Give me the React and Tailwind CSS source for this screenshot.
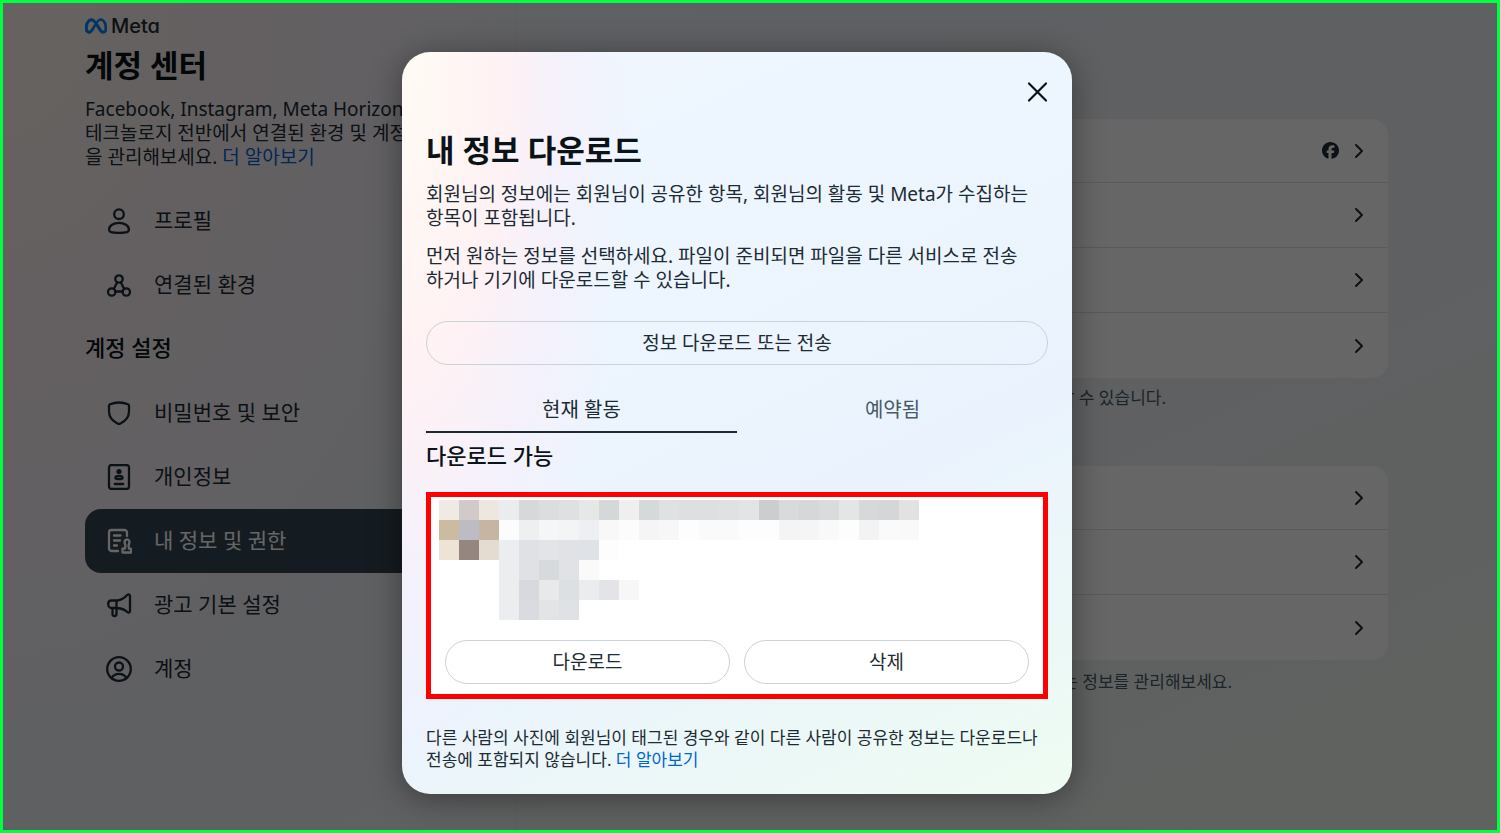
import React, { useState } from 'react';
import { ChevronRight } from 'lucide-react';
import { FaFacebook, FaMeta } from 'react-icons/fa6';

const Icon = ({ children }) => (
  <svg
    width="26"
    height="26"
    viewBox="0 0 26 26"
    fill="none"
    stroke="currentColor"
    strokeWidth="2.3"
    strokeLinecap="round"
    strokeLinejoin="round"
    className="shrink-0"
    aria-hidden="true"
  >
    {children}
  </svg>
);

const ProfileIcon = () => (
  <Icon>
    <circle cx="13" cy="6.2" r="4.8" />
    <path d="M13 14.8c5.600 0 9.900 3 9.900 6.800 0 1.600-.8 2.200-2.100 2.600-2 .5-4.700.7-7.800.7s-5.800-.2-7.800-.7c-1.300-.4-2.100-1-2.100-2.600 0-3.800 4.300-6.800 9.900-6.800z" />
  </Icon>
);

const ConnectedIcon = () => (
  <Icon>
    <circle cx="13" cy="7" r="3.700" />
    <circle cx="5.700" cy="20" r="3.700" />
    <circle cx="20.300" cy="20" r="3.700" />
    <path d="M11.200 10.300 7.900 16.800M14.800 10.300l3.300 6.500M9.500 19.500h7" />
  </Icon>
);

const ShieldIcon = () => (
  <Icon>
    <path d="M13 2.500c3.200 0 6.300.6 8.900 1.700.7.300 1.100.9 1.100 1.600v5.700c0 5.500-3.700 9.700-8.900 12.200-.7.300-1.500.3-2.200 0C6.700 21.200 3 17 3 11.500V5.800c0-.7.400-1.300 1.100-1.600C6.700 3.100 9.800 2.500 13 2.500z" />
  </Icon>
);

const BadgeIcon = () => (
  <Icon>
    <rect x="3" y="1" width="20" height="24" rx="2.500" />
    <circle cx="13" cy="7.500" r="2.600" fill="currentColor" stroke="none" />
    <path d="M13 12c2.200 0 3.600 1 3.600 2 0 .9-1.300 1.200-3.600 1.200s-3.600-.3-3.600-1.200c0-1 1.400-2 3.600-2zM8.800 20h8.400" />
  </Icon>
);

const PermissionIcon = () => (
  <Icon>
    <path d="M12 23H5.500A2.500 2.500 0 0 1 3 20.500v-16A2.500 2.500 0 0 1 5.500 2h13A2.500 2.500 0 0 1 21 4.500V8" />
    <path d="M8 7.500h6.500M8 12.500h6M8 17.500h3" />
    <path d="M16.500 24.500v-3.800h2.300l.7-2.800-.8-3a2.400 2.800 0 1 1 4.600 0l-.8 3 .5 2.800h2v3.800z" />
  </Icon>
);

const MegaphoneIcon = () => (
  <Icon>
    <path d="M11.500 8.500H5.500C3.500 8.500 2.200 9.900 2.200 12s1.300 4 3.300 4h6c3.800.3 7 1.500 10 4.200.9.700 2.500.3 2.500-1.200V4c0-1.500-1.600-1.900-2.500-1.200-3 3.200-6.200 5.300-10 5.700zM10.500 8.500V16M6.500 16v6c0 1.200.8 2 2 2s2-.8 2-2v-6" />
  </Icon>
);

const AccountIcon = () => (
  <Icon>
    <circle cx="13" cy="13" r="11.800" />
    <circle cx="13" cy="10.500" r="4" />
    <path d="M5.500 22c1.400-2.600 4.300-4.200 7.500-4.200s6.100 1.600 7.500 4.200" />
  </Icon>
);

const topNav = [
  { id: 'profile', icon: ProfileIcon, label: '프로필' },
  { id: 'connected', icon: ConnectedIcon, label: '연결된 환경' }
];

const settingsNav = [
  { id: 'security', icon: ShieldIcon, label: '비밀번호 및 보안' },
  { id: 'personal', icon: BadgeIcon, label: '개인정보' },
  { id: 'permissions', icon: PermissionIcon, label: '내 정보 및 권한' },
  { id: 'ads', icon: MegaphoneIcon, label: '광고 기본 설정' },
  { id: 'account', icon: AccountIcon, label: '계정' }
];

// 20px blocks, null leaves the block empty
const mosaic = [
  ['#efeae4', '#d1cac9', '#ede7e0', '#ebecee', '#d6d8d9', '#dbddde', '#dfe0e1', '#e6e8e6', '#d5d8d9', '#efefef', '#d6d9da', '#e0e1e3', '#dddfe0', '#dddfe0', '#e0e1e2', '#e3e4e5', '#cccdce', '#d9dadc', '#d6d7d9', '#dadbdd', '#e4e6e5', '#d6d8d9', '#d4d6d8', '#e2e2e2'],
  ['#cbbba0', '#bdbcc5', '#c6b5a3', '#fcfcfc', '#eef0ef', '#f4f6f8', '#f3f4f4', '#edeff2', '#f8f8f8', '#fcfcfc', '#f5f5f5', '#f7f7f7', '#fdfdfd', '#fafafa', '#fafafa', '#fdfdfd', '#fdfdfd', '#f4f4f4', '#f4f5f4', '#f9f9f9', '#fdfdfd', '#f3f3f3', '#fafafa', '#f9f9f9'],
  ['#eee4d6', '#95867f', '#e4dcd1', '#ecedf0', '#dfe1e5', '#e2e4e8', '#e0e2e6', '#dfe3e7', '#fdfdfd'],
  [null, null, null, '#ecedef', '#dfe1e4', '#d6dadc', '#e0e2e5', '#fafafa'],
  [null, null, null, '#ecedef', '#d7d9de', '#e8e9eb', '#dce0e3', '#ebecee', '#e2e4e8', '#f7f7f8'],
  [null, null, null, '#ecedf0', '#d9dbe0', '#e3e4e6', '#dfe1e4']
];

const Mosaic = () => (
  <svg width="480" height="120" viewBox="0 0 480 120" shapeRendering="crispEdges" className="block max-w-full" aria-hidden="true">
    {mosaic.map((row, y) =>
      row.map((fill, x) => fill && <rect key={`${x}-${y}`} x={x * 20} y={y * 20} width="20" height="20" fill={fill} />)
    )}
  </svg>
);

const NavItem = ({ item, active }) => (
  <a
    href={`#${item.id}`}
    className={`flex h-16 items-center gap-[22px] rounded-2xl px-[21px] text-[21px] ${active ? 'bg-[#344854] text-white' : 'text-[#1c2b33]'}`}
  >
    <item.icon />
    <span>{item.label}</span>
  </a>
);

const CardList = ({ rows }) => (
  <div className="divide-y divide-[#dee1e5] overflow-hidden rounded-2xl bg-white">
    {rows.map(row => (
      <button key={row.id} aria-label={row.id} className="flex h-16 w-full items-center justify-end gap-2 px-[17px] text-[#1c2b33] [&:not(:first-child)]:h-[65px]">
        {row.facebook && <FaFacebook size={17} />}
        <ChevronRight size={24} strokeWidth={2} />
      </button>
    ))}
  </div>
);

const PillButton = ({ children }) => (
  <button className="h-11 w-full rounded-full border border-[#cbd2d9] text-[19px] text-[#1c2b33]">{children}</button>
);

const DownloadDialog = () => {
  const [tab, setTab] = useState('current');

  return (
    <div
      role="dialog"
      aria-labelledby="dialog-title"
      className="w-full max-w-[670px] rounded-[28px] bg-[radial-gradient(ellipse_34%_100%_at_0%_0%,#fffbf3_0%,#fff2f4_42%,#f5f1fb_68%,transparent_100%),linear-gradient(155deg,#f0f7ff_0%,#eaf3fd_62%,#eefcf2_100%)] px-6 pb-[23px] pt-6 shadow-[0_4px_32px_rgba(0,0,0,0.4)]"
    >
      <div className="flex h-8 items-center justify-end">
        <button aria-label="닫기" className="text-[#0a1317]">
          <svg width="22" height="22" viewBox="0 0 22 22" fill="none" stroke="currentColor" strokeWidth="2.2" strokeLinecap="round">
            <path d="M3 2.500l17 17M20 2.500l-17 17" />
          </svg>
        </button>
      </div>

      <h2 id="dialog-title" className="mt-[22px] text-[31px] font-bold leading-10 text-[#0a1317]">내 정보 다운로드</h2>
      <div className="mt-3 space-y-3.5 pr-4 text-[19px] leading-6 text-[#1c2b33]">
        <p>회원님의 정보에는 회원님이 공유한 항목, 회원님의 활동 및 Meta가 수집하는 항목이 포함됩니다.</p>
        <p>먼저 원하는 정보를 선택하세요. 파일이 준비되면 파일을 다른 서비스로 전송하거나 기기에 다운로드할 수 있습니다.</p>
      </div>

      <div className="mt-[29px]">
        <PillButton>정보 다운로드 또는 전송</PillButton>
      </div>

      <div role="tablist" className="mt-6 flex text-[20px]">
        {[
          { id: 'current', label: '현재 활동' },
          { id: 'scheduled', label: '예약됨' }
        ].map(t => (
          <button
            key={t.id}
            role="tab"
            aria-selected={tab === t.id}
            onClick={() => setTab(t.id)}
            className={`h-11 flex-1 border-b-2 ${tab === t.id ? 'border-[#1c2b33] text-[#1c2b33]' : 'border-transparent text-[#465a69]'}`}
          >
            {t.label}
          </button>
        ))}
      </div>

      <h3 className="mt-2 text-[22px] font-medium leading-7 text-[#0a1317]">다운로드 가능</h3>

      <div className="mt-[23px] border-[5px] border-[#ff0000] bg-white pb-2.5 pt-[3px]">
        <div className="px-2">
          <Mosaic />
        </div>
        <div className="mt-5 flex gap-3.5 px-3.5">
          <PillButton>다운로드</PillButton>
          <PillButton>삭제</PillButton>
        </div>
      </div>

      <p className="mt-7 text-[17px] leading-[22px] text-[#1c2b33]">
        다른 사람의 사진에 회원님이 태그된 경우와 같이 다른 사람이 공유한 정보는 다운로드나 전송에 포함되지 않습니다.{' '}
        <a href="#learn-more" className="inline-block text-[#0064d1]">더 알아보기</a>
      </p>
    </div>
  );
};

const App = () => (
  <div className="relative min-h-screen overflow-hidden border-[3px] border-[#00ff40] bg-[radial-gradient(ellipse_38%_100%_at_0%_0%,#fff6ef_0%,#fbf1f2_35%,#f5f1f8_65%,transparent_100%),linear-gradient(155deg,#f0f3f8_0%,#eaeff6_45%,#f0f5ef_100%)] font-['Noto_Sans','Noto_Sans_CJK_KR',sans-serif] text-[#1c2b33]">
    <div className="flex min-h-[827px]">
      <aside className="w-[514px] shrink-0 border-r border-[#e6e9ee] pl-[82px] pr-6 pt-[11px]">
        <div className="flex h-6 items-center gap-1">
          <FaMeta size={22} className="stroke-[#0082fb] stroke-[24px] text-[#0082fb]" />
          <span className="font-['Inter'] text-[20px] font-medium [font-feature-settings:'cv11']">Meta</span>
        </div>
        <h1 className="mt-[7px] text-[31px] font-bold leading-10 text-[#0a1317]">계정 센터</h1>
        <p className="mt-3 text-[19px] leading-6">
          Facebook, Instagram, Meta Horizon<br />
          테크놀로지 전반에서 연결된 환경 및 계정<br />
          을 관리해보세요. <a href="#about" className="text-[#0064d1]">더 알아보기</a>
        </p>

        <nav className="mt-5">
          {topNav.map(item => <NavItem key={item.id} item={item} />)}
          <h2 className="flex h-16 items-center pb-1 text-[22px] font-medium text-[#0a1317]">계정 설정</h2>
          {settingsNav.map(item => <NavItem key={item.id} item={item} active={item.id === 'permissions'} />)}
        </nav>
      </aside>

      <main className="flex-1 pl-8 pr-[109px] pt-[116px]">
        <CardList rows={[{ id: 'view', facebook: true }, { id: 'download' }, { id: 'transfer' }, { id: 'search' }]} />
        <p className="mt-2 pr-[222px] text-right text-[17px] leading-6 text-[#465a69]">할 수 있습니다.</p>
        <div className="mt-14">
          <CardList rows={[{ id: 'activity' }, { id: 'apps' }, { id: 'contacts' }]} />
        </div>
        <p className="mt-2.5 pr-[156px] text-right text-[17px] leading-6 text-[#465a69]">는 정보를 관리해보세요.</p>
      </main>
    </div>

    <div className="absolute inset-0 flex items-start justify-center bg-black/60 pr-[26px] pt-[49px]">
      <DownloadDialog />
    </div>
  </div>
);

export default App;
